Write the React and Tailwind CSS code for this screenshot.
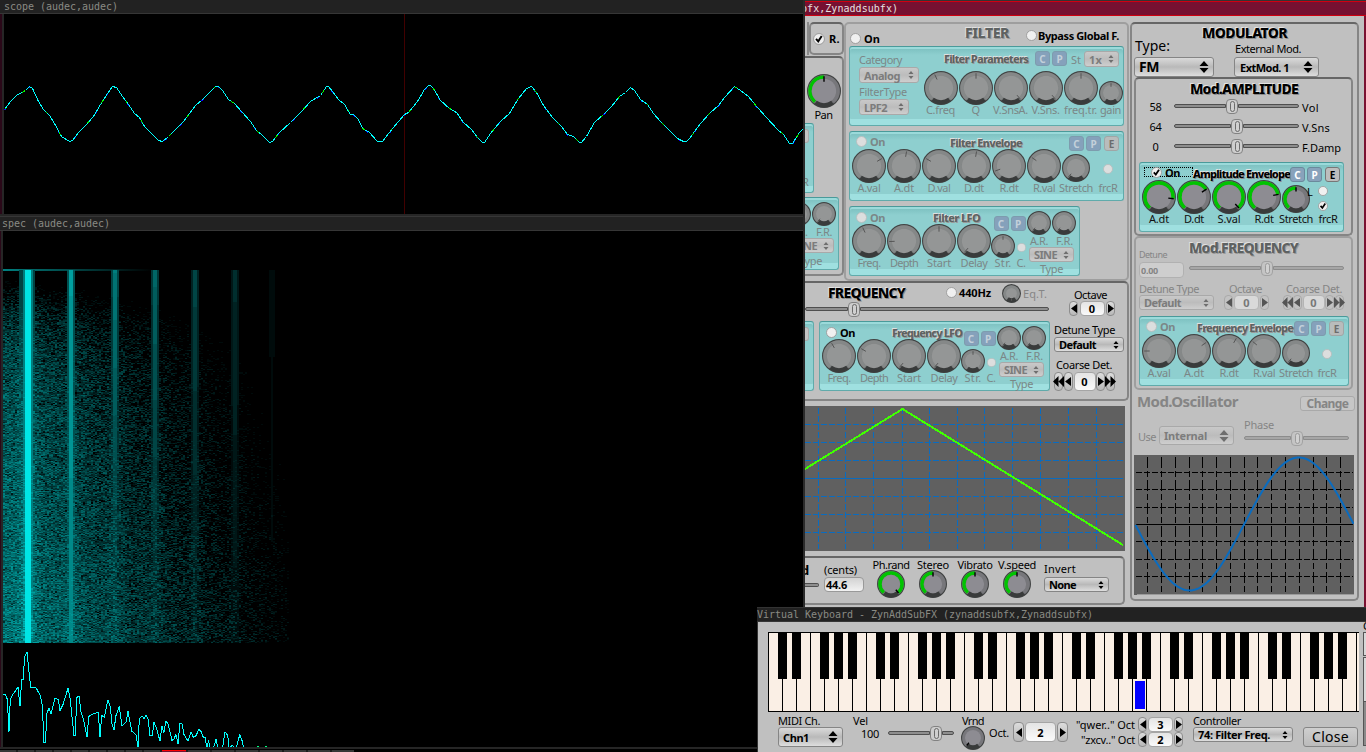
import React, { useLayoutEffect, useMemo, useRef, useState } from 'react';

/* ---------- text ---------- */

// Text set to a given advance width by adjusting its tracking.
function T({ w, className = '', children }) {
  const ref = useRef(null);
  const [ls, setLs] = useState(0);
  useLayoutEffect(() => {
    const natural = ref.current.getBoundingClientRect().width;
    setLs((w - natural) / String(children).length);
  }, []);
  return (
    <span className={`block shrink-0 whitespace-nowrap leading-none ${className}`} style={{ width: w }}>
      <span ref={ref} style={{ letterSpacing: ls }}>{children}</span>
    </span>
  );
}

const DIM = 'text-[#7b8787]';
const GREY = 'text-[#858585]';
const EMBOSS = 'font-extrabold text-black [text-shadow:-1px_-1px_0_#e4e4e4,1px_1px_0_#8a8a8a]';
const EMBOSS_DIM = 'font-extrabold text-[#5e6262] [text-shadow:-1px_-1px_0_#e0e0e0,1px_1px_0_#999]';

/* ---------- widgets ---------- */

function polar(c, r, deg) {
  const a = ((deg - 90) * Math.PI) / 180;
  return [c + r * Math.cos(a), c + r * Math.sin(a)];
}

function arcPath(c, r, from, to) {
  const [x1, y1] = polar(c, r, from);
  const [x2, y2] = polar(c, r, to);
  return `M${x1} ${y1}A${r} ${r} 0 ${to - from > 180 ? 1 : 0} 1 ${x2} ${y2}`;
}

function Knob({ s = 34, a = 0, on = false, className = '' }) {
  const c = s / 2;
  const R = c - 1.2;
  const ring = s > 25 ? 3.6 : 2.8;
  const [px, py] = polar(c, R - 1, a);
  const [qx, qy] = polar(c, R - s * 0.19, a);
  return (
    <svg width={s} height={s} className={`block shrink-0 ${className}`}>
      <circle cx={c} cy={c} r={R + 0.5} fill={on ? '#6f6f73' : '#7c7f7f'} stroke="#424444" strokeWidth="1.4" />
      <path d={arcPath(c, R - ring / 2, -140, 140)} stroke={on ? '#77777b' : '#858888'} strokeWidth={ring} fill="none" />
      {on && a > -139 && <path d={arcPath(c, R - ring / 2, -140, a)} stroke="#00c400" strokeWidth={ring} fill="none" />}
      <circle cx={c} cy={c} r={R - ring} fill={on ? '#8d8c92' : '#949696'} />
      <path d={arcPath(c, R - 1.5, 144, 216)} stroke="#393b3b" strokeWidth="4.2" fill="none" />
      <path d={`M${px} ${py}L${qx} ${qy}`} stroke={on ? '#000' : '#555'} strokeWidth={on ? 1.4 : 1} />
    </svg>
  );
}

function Dot({ checked, dim, s = 11, className = '' }) {
  return (
    <svg width={s} height={s} viewBox="0 0 11 11" className={`block shrink-0 ${className}`}>
      <circle cx="5.5" cy="5.5" r="5" fill={dim ? '#dcdede' : '#f0f0f0'} stroke={dim ? '#b5bdbd' : '#9a9a9a'} strokeWidth="0.9" />
      {checked && <path d="M2.8 5.4L4.8 7.6L8 2.8" stroke="#000" strokeWidth="1.8" fill="none" />}
    </svg>
  );
}

function UpDown({ big, dim }) {
  return big ? (
    <svg width="10" height="12" className="block shrink-0">
      <path d="M5 0L9.5 5H.5ZM5 12L9.5 7H.5Z" fill={dim ? '#6e6e6e' : '#000'} />
    </svg>
  ) : (
    <svg width="6" height="8" className="block shrink-0">
      <path d="M3 0L5.5 3H.5ZM3 8L5.5 5H.5Z" fill={dim ? '#6e6e6e' : '#000'} />
    </svg>
  );
}

function Select({ text, tw, dim, big, arrowBig, className = '' }) {
  return (
    <div
      className={`flex shrink-0 items-center justify-between rounded-[3px] border font-bold ${className} ${
        dim
          ? 'border-[#a9a9a9] bg-linear-to-b from-[#c9c9c9] via-[#bcbcbc] to-[#cecece] text-[#7c7c7c]'
          : 'border-[#858585] bg-linear-to-b from-[#dadada] via-[#b9b9b9] to-[#dedede] text-black'
      }`}
    >
      <T w={tw} className={big ? 'text-[14px]' : 'text-[11px]'}>{text}</T>
      <UpDown big={arrowBig} dim={dim} />
    </div>
  );
}

function Slider({ at, dim, className = '' }) {
  return (
    <div className={`flex h-[16px] shrink-0 items-center ${className}`}>
      <div className={`h-[4px] rounded-l-sm border ${at} ${dim ? 'border-[#8c8c8c] bg-[#a6a6a6]' : 'border-[#4f4f4f] bg-[#8e8e8e]'}`} />
      <div
        className={`flex h-[15px] w-[12px] shrink-0 items-center justify-center rounded-[4px] border ${
          dim ? 'border-[#a2a2a2] bg-[#c4c4c4]' : 'border-[#828282] bg-[#cdcdcd]'
        }`}
      >
        <div className={`h-[11px] w-[5px] rounded-full border bg-[#d0d0d0] ${dim ? 'border-[#9b9b9b]' : 'border-[#6b6b6b]'}`} />
      </div>
      <div className={`h-[4px] flex-1 rounded-r-sm border ${dim ? 'border-[#8c8c8c] bg-[#a6a6a6]' : 'border-[#4f4f4f] bg-[#8e8e8e]'}`} />
    </div>
  );
}

function Step({ dir, twice, dim, className }) {
  return (
    <div className={`flex h-full shrink-0 items-center justify-center rounded-[4px] border ${dim ? 'border-[#aaa] bg-[#c2c2c2]' : 'border-[#8d8d8d] bg-linear-to-b from-[#dcdcdc] to-[#b8b8b8]'} ${className}`}>
      <svg width={twice ? 11 : 6} height={twice ? 11 : 9} viewBox={twice ? '0 0 10 9' : '0 0 5 9'} preserveAspectRatio="none" className={`block shrink-0 ${dir === 'r' ? 'rotate-180' : ''}`}>
        <path d={twice ? 'M5 0V9L0 4.5ZM10 0V9L5 4.5Z' : 'M5 0V9L0 4.5Z'} fill={dim ? '#555' : '#000'} />
      </svg>
    </div>
  );
}

function Spin({ v, dim, coarse, btn = 'w-[9px]', box = 'w-[25px]', className = '' }) {
  return (
    <div className={`flex shrink-0 items-center justify-between ${className}`}>
      {coarse && <Step dir="l" twice dim={dim} className={btn} />}
      <Step dir="l" dim={dim} className={btn} />
      <div className={`flex h-full items-center justify-center rounded-[4px] border text-[11px] leading-none font-bold ${box} ${dim ? 'border-[#b4b4b4] bg-[#d9d9d9] text-[#777]' : 'border-[#a5a5a5] bg-linear-to-b from-[#e4e4e4] to-[#fafafa] text-black'}`}>
        {v}
      </div>
      <Step dir="r" dim={dim} className={btn} />
      {coarse && <Step dir="r" twice dim={dim} className={btn} />}
    </div>
  );
}

function Cap({ k, live }) {
  const tone =
    k === 'E'
      ? live
        ? 'bg-[#bdbdbd] border-[#777] text-black'
        : 'bg-[#b9bcbc] border-[#a0a6a6] text-[#6c6c6c]'
      : live
        ? 'bg-[#88a2bb] border-[#6b8a9c] text-white'
        : 'bg-[#85a1bb] border-[#7d9cae] text-[#c3d0da]';
  return <div className={`flex h-[15px] w-[15px] shrink-0 items-center justify-center rounded-[3px] border text-[10px] leading-none font-bold ${tone}`}>{k}</div>;
}

function Teal({ className = '', children }) {
  return (
    <div className={`shrink-0 rounded-[3px] border border-[#60abab] border-t-[#4a9a9a] bg-linear-to-b from-[#7fc2c2] from-[2px] via-[#8ecfcf] via-[8px] to-[#8ecfcf] shadow-[inset_0_-7px_0_-1px_#9fe0e0,inset_0_2px_0_#9bdada] ${className}`}>
      {children}
    </div>
  );
}

function Unit({ label, lw, live, slot = 'w-[35px]', pad = '', children }) {
  return (
    <div className={`flex shrink-0 flex-col items-center ${slot}`}>
      <div className={`flex h-[34px] items-center justify-center ${pad}`}>{children}</div>
      <T w={lw} className={`mt-[-1px] text-[11px] ${live ? 'text-[#111]' : DIM}`}>{label}</T>
    </div>
  );
}

function Frame({ dim, className = '', children }) {
  return (
    <div className={`shrink-0 rounded-[5px] border-2 ${dim ? 'border-[#9e9e9e]' : 'border-[#858585] border-t-[#666]'} ${className}`}>
      {children}
    </div>
  );
}

/* ---------- synth sections ---------- */

function Envelope({ title, tw, titleAt, knobs, live, wide, className }) {
  return (
    <Teal className={`h-[70px] ${className}`}>
      <div className="flex h-[17px] items-start">
        <div className={`flex h-[10px] w-[48px] shrink-0 items-center pl-[6px] ${live ? 'mt-[4px] ml-[4px] w-[49px] border border-dotted border-black pl-[1px]' : 'mt-[4px]'}`}>
          <Dot checked={live} dim={!live} />
          <T w={15} className={`ml-[3px] text-[11px] font-bold ${live ? 'text-black' : DIM}`}>On</T>
        </div>
        <T w={tw} className={`mt-[5px] text-[11px] ${live ? EMBOSS : EMBOSS_DIM} ${titleAt}`}>{title}</T>
        <div className="mt-[4px] mr-[4px] ml-auto flex">
          <Cap k="C" live={live} />
          <div className="w-[2px]" />
          <Cap k="P" live={live} />
          <div className="w-[3px]" />
          <Cap k="E" live={live} />
        </div>
      </div>
      <div className="flex pl-[1.5px]">
        {knobs.map(([l, w, a], i) => (
          <Unit key={i} label={l} lw={w} live={live}><Knob a={a} on={live} /></Unit>
        ))}
        <Unit label="Stretch" lw={34} live={live} slot="w-[29px]" pad="pt-[4px]"><Knob s={28} a={live ? 0 : -140} on={live} /></Unit>
        <Unit label="frcR" lw={19} live={live} slot={wide ? 'w-[33px]' : 'w-[35px]'} pad="pt-[5px]">
          {live ? (
            <div className="flex h-[34px] items-center gap-[5px] pb-[3px] pl-[20px]">
              <div className="-ml-[20px] flex flex-col gap-[4px]">
                <div className="-ml-[11px] flex items-center gap-[6px]">
                  <span className="w-[5px] text-[11px] leading-none text-black">L</span>
                  <Dot s={10} />
                </div>
                <Dot checked s={10} />
              </div>
            </div>
          ) : <Dot dim s={10} />}
        </Unit>
      </div>
    </Teal>
  );
}

function Lfo({ title, tw, titleAt, on, angles, className = '' }) {
  const names = [['Freq.', 23], ['Depth', 28], ['Start', 24], ['Delay', 27]];
  return (
    <Teal className={`flex h-[70px] w-[231px] ${className}`}>
      <div className="w-[141.5px] shrink-0">
        <div className="flex h-[17px] items-start">
          <div className="mt-[5px] ml-[6px] flex w-[42px] shrink-0 items-center">
            <Dot dim={!on} />
            <T w={15} className={`ml-[3px] text-[11px] font-bold ${on ? 'text-black' : DIM}`}>On</T>
          </div>
          <T w={tw} className={`mt-[5px] text-[11px] ${EMBOSS_DIM} ${titleAt}`}>{title}</T>
        </div>
        <div className="flex pl-[1.5px]">
          {names.map(([l, w], i) => <Unit key={l} label={l} lw={w}><Knob a={angles[i]} /></Unit>)}
        </div>
      </div>
      <div className="flex w-[34px] shrink-0 flex-col">
        <div className="mt-[9px] ml-[2px] flex gap-[2px]"><Cap k="C" /><Cap k="P" /></div>
        <div className="mt-[3px] flex h-[24px] items-center">
          <Knob s={24} className="-ml-[1px]" />
          <Dot dim s={9} className="mt-[3px] ml-[2px]" />
        </div>
        <div className={`-mt-[1px] flex ${DIM}`}>
          <T w={17} className="ml-[3px] text-[11px]">Str.</T>
          <T w={9} className="ml-[5px] text-[11px]">C.</T>
        </div>
      </div>
      <div className={`flex w-[52px] shrink-0 flex-col items-center ${DIM}`}>
        <div className="mt-[4px] flex gap-[1px]"><Knob s={24} a={-140} /><Knob s={24} a={-140} /></div>
        <div className="flex gap-[8px]"><T w={18} className="text-[11px]">A.R.</T><T w={17} className="text-[11px]">F.R.</T></div>
        <Select dim text="SINE" tw={23} className="mt-[1px] h-[15px] w-[45px] px-[4px]" />
        <T w={23} className="mt-[1px] text-[11px]">Type</T>
      </div>
    </Teal>
  );
}

function LeftStrip() {
  return (
    <div className="flex w-[39px] shrink-0 flex-col">
      <div className="mt-[6px] flex">
        <div className="h-[33px] w-[4px] shrink-0 border-r-2 border-[#8a8a8a]" />
        <Frame className="flex h-[33px] w-[35px] items-center pl-[2px]">
          <Dot checked s={12} />
          <T w={11} className="ml-[4px] text-[11px] font-bold">R.</T>
        </Frame>
      </div>
      <div className="mt-[1px] h-[220px] rounded-r-[5px] border-2 border-l-0 border-[#858585] border-t-[#666]">
        <div className="flex flex-col items-center pt-[16px]">
          <Knob s={34} on className="ml-[1px]" />
          <T w={18} className="mt-[1px] text-[11px]">Pan</T>
        </div>
        <Teal className="mt-[3px] flex h-[70px] w-[9px] flex-col justify-between overflow-hidden rounded-l-none border-l-0 py-[5px]">
          <div className="h-[14px] w-[4px] rounded-r-[3px] border border-l-0 border-[#a9a9a9] bg-[#c4c4c4]" />
          <T w={7} className={`-ml-[3px] text-[11px] ${DIM}`}>R</T>
        </Teal>
        <Teal className="mt-[4px] flex h-[73px] w-[34px] flex-col overflow-hidden rounded-l-none border-l-0">
          <div className="mt-[4px] -ml-[18px] flex gap-[1px]"><Knob s={24} a={-140} /><Knob s={24} a={-140} /></div>
          <div className={`flex ${DIM}`}><T w={3} className="text-[11px]">.</T><T w={16} className="ml-[8px] text-[11px]">F.R.</T></div>
          <Select dim text="SINE" tw={23} className="mt-[1px] -ml-[16px] h-[15px] w-[45px] px-[4px]" />
          <T w={23} className={`mt-[2px] -ml-[6px] text-[11px] ${DIM}`}>Type</T>
        </Teal>
      </div>
    </div>
  );
}

function FilterPanel() {
  const knobs = [['C.freq', 29, -25], ['Q', 8, 0], ['V.SnsA.', 35, 140], ['V.Sns.', 28, 140], ['freq.tr.', 33, 0]];
  return (
    <Frame dim className="mt-[6px] h-[259px] w-[285px] px-[3px]">
      <div className="flex h-[22px] items-start">
        <Dot className="mt-[9px] ml-[1px]" />
        <T w={16} className="mt-[9px] ml-[3px] text-[11px] font-bold">On</T>
        <T w={44} className={`mt-[2px] ml-[85px] text-[14px] ${EMBOSS_DIM}`}>FILTER</T>
        <Dot className="mt-[6px] ml-[17px]" />
        <T w={81} className="mt-[6px] ml-[1px] text-[11px] font-bold">Bypass Global F.</T>
      </div>
      <Teal className={`flex h-[80px] w-[275px] ${DIM}`}>
        <div className="ml-[9px] w-[64px] shrink-0">
          <T w={43} className="mt-[7px] text-[11px]">Category</T>
          <Select dim text="Analog" tw={36} className="mt-[2px] h-[16px] w-[60px] px-[4px]" />
          <T w={48} className="mt-[3px] text-[11px]">FilterType</T>
          <Select dim text="LPF2" tw={23} className="mt-[2px] h-[16px] w-[50px] px-[4px]" />
        </div>
        <div className="w-[200px] shrink-0">
          <div className="flex h-[23px] items-start">
            <T w={84} className={`mt-[6px] ml-[21px] text-[11px] ${EMBOSS_DIM}`}>Filter Parameters</T>
            <div className="mt-[4px] ml-[7px] flex gap-[2px]"><Cap k="C" /><Cap k="P" /></div>
            <T w={10} className="mt-[7px] ml-[4px] text-[11px]">St</T>
            <Select dim text="1x" tw={13} className="mt-[4px] ml-[3px] h-[16px] w-[35px] px-[4px]" />
          </div>
          <div className="flex pt-[1px]">
            {knobs.map(([l, w, a]) => <Unit key={l} label={l} lw={w}><Knob a={a} /></Unit>)}
            <Unit label="gain" lw={21} slot="w-[25px]" pad="pt-[9px]"><Knob s={24} /></Unit>
          </div>
        </div>
      </Teal>
      <Envelope
        className="mt-[5px] w-[275px]"
        title="Filter Envelope" tw={72} titleAt="ml-[52px]"
        knobs={[['A.val', 23, 60], ['A.dt', 20, 10], ['D.val', 23, -60], ['D.dt', 20, 10], ['R.dt', 19, -110], ['R.val', 22, -55]]}
      />
      <Lfo className="mt-[5px]" title="Filter LFO" tw={47} titleAt="ml-[35px]" angles={[-25, -92, 0, -140]} />
    </Frame>
  );
}

function FrequencyPanel() {
  return (
    <Frame className="h-[120px] rounded-l-none border-l-0">
      <div className="flex">
        <div className="w-[246px] shrink-0">
          <div className="flex h-[19px] items-start">
            <T w={77} className={`mt-[3px] ml-[23px] text-[14px] ${EMBOSS}`}>FREQUENCY</T>
            <Dot className="mt-[4px] ml-[41px]" />
            <T w={32} className="mt-[4px] ml-[2px] text-[11px] font-bold">440Hz</T>
            <Knob s={19} a={180} className="mt-[1px] ml-[11px]" />
            <T w={24} className={`mt-[5px] ml-[2px] text-[11px] ${GREY}`}>Eq.T.</T>
          </div>
          <Slider at="w-[43px]" className="-mt-[1px] w-[244px]" />
          <div className="mt-[4px] flex">
            <Teal className="h-[70px] w-[9px] rounded-l-none border-l-0 pt-[5px]">
              <div className="h-[14px] w-[4px] rounded-r-[3px] border border-l-0 border-[#a9a9a9] bg-[#c4c4c4]" />
            </Teal>
            <Lfo on className="ml-[5px]" title="Frequency LFO" tw={70} titleAt="ml-[24px]" angles={[-30, -60, -140, -140]} />
          </div>
        </div>
        <div className="flex w-[74px] shrink-0 flex-col pl-[3px]">
          <T w={33} className="mt-[6px] ml-[20px] text-[11px]">Octave</T>
          <Spin v="0" className="mt-[1px] ml-[15px] h-[15px] w-[46px]" />
          <T w={61} className="mt-[8px] text-[11px]">Detune Type</T>
          <Select text="Default" tw={37} className="mt-[2px] h-[15px] w-[70px] px-[4px]" />
          <T w={56} className="mt-[7px] ml-[2px] text-[11px]">Coarse Det.</T>
          <Spin v="0" coarse box="w-[22px]" className="mt-[2px] h-[19px] w-[61px]" />
        </div>
      </div>
    </Frame>
  );
}

function OscGraph() {
  const vs = [13.5, 40.5, 68.5, 97.5, 124.5, 152.5, 179.5, 207.5, 235.5, 263.5, 291.5];
  const hs = [18.5, 36.5, 54.5, 90.5, 108.5, 126.5];
  return (
    <svg width="320" height="145" className="mt-[5px] block shrink-0 bg-[#606060]" shapeRendering="crispEdges">
      <g stroke="#0a6cc0" strokeDasharray="6 2">
        {vs.map((x) => <path key={x} d={`M${x} 2V143`} />)}
        {hs.map((y) => <path key={y} d={`M0 ${y}H318`} />)}
      </g>
      <path d="M0 72.5H318" stroke="#0a6cc0" />
      <path d="M0 63L97.5 3L318 139" stroke="#40ff00" strokeWidth="2" fill="none" />
    </svg>
  );
}

function VoiceBar() {
  const ks = [['Ph.rand', 37, 140], ['Stereo', 32, 0], ['Vibrato', 35, 0], ['V.speed', 38, 0]];
  return (
    <Frame className="mt-[5px] flex h-[49px] w-[320px] rounded-l-none border-l-0">
      <div className="w-[15px] shrink-0">
        <div className="mt-[6px] w-[4px] overflow-hidden"><T w={8} className="-ml-[4px] text-[13px] font-bold">d</T></div>
        <div className="mt-[6px] h-[4px] w-[14px] rounded-r-sm border border-l-0 border-[#4f4f4f] bg-[#8e8e8e]" />
      </div>
      <div className="ml-[4px] w-[45px] shrink-0">
        <T w={33} className="mt-[6px] text-[11px]">(cents)</T>
        <div className="mt-[2px] flex h-[15px] w-[40px] items-center rounded-[4px] border border-[#999] bg-linear-to-b from-[#d2d2d2] to-[#f2f2f2] pl-[1px]">
          <T w={21} className="text-[11px] font-bold">44.6</T>
        </div>
      </div>
      <div className="ml-[1px] flex shrink-0">
        {ks.map(([l, w, a]) => (
          <div key={l} className="flex w-[42px] flex-col items-center">
            <T w={w} className="mt-[1px] text-[11px]">{l}</T>
            <Knob s={28} on a={a} />
          </div>
        ))}
      </div>
      <div className="ml-[6px]">
        <T w={32} className="mt-[5px] text-[11px]">Invert</T>
        <Select text="None" tw={27} className="mt-[3px] h-[15px] w-[65px] px-[4px]" />
      </div>
    </Frame>
  );
}

function SineGraph() {
  const vs = [13.5, 27.5, 41.5, 55.5, 68.5, 82.5, 96.5, 110.5, 123.5, 137.5, 151.5, 165.5, 179.5, 192.5, 206.5];
  const hs = [17.5, 34.5, 52.5, 86.5, 104.5, 121.5];
  let d = '';
  for (let i = 0; i <= 109; i++) {
    const x = 1.5 + i * 2;
    d += `${i ? 'L' : 'M'}${x} ${(69 + 66.5 * Math.sin(((x - 1) / 218.6) * 2 * Math.PI)).toFixed(2)}`;
  }
  return (
    <svg width="220" height="140" className="mt-[11px] -ml-[1px] block shrink-0 bg-[#606060]">
      <g stroke="#000" shapeRendering="crispEdges">
        {vs.map((x) => <path key={x} d={`M${x} 2V138`} strokeDasharray="11 3 6 3" />)}
        {hs.map((y) => <path key={y} d={`M2 ${y}H219`} strokeDasharray="6 2" />)}
        <path d="M2 69.5H219" />
      </g>
      <path d={d} stroke="#0a6cc0" strokeWidth="2" fill="none" />
      <path d="M3 139.5H220" stroke="#9a9a9a" />
    </svg>
  );
}

function Modulator() {
  const rows = [['58', 'Vol', 17, 'w-[52px]', 12], ['64', 'V.Sns', 28, 'w-[57px]', 12], ['0', 'F.Damp', 39, 'w-[57px]', 6]];
  return (
    <Frame className="mt-[6px] ml-[1px] h-[579px] w-[229px] pl-[3px]">
      <T w={85} className={`mt-[2px] ml-[67px] text-[14px] ${EMBOSS}`}>MODULATOR</T>
      <div className="flex">
        <div className="w-[100px] shrink-0">
          <T w={35} className="-mt-[1px] text-[14px]">Type:</T>
          <Select text="FM" tw={20} big arrowBig className="mt-[4px] -ml-[1px] h-[20px] w-[80px] px-[4px]" />
        </div>
        <div>
          <T w={66} className="mt-[3px] text-[11px]">External Mod.</T>
          <Select text="ExtMod. 1" tw={49} arrowBig className="mt-[3px] -ml-[1px] h-[20px] w-[85px] px-[5px]" />
        </div>
      </div>
      <Frame className="-ml-[1px] h-[159px] w-[219px] pl-[3px]">
        <T w={108} className={`mt-[3px] ml-[51px] text-[14px] ${EMBOSS}`}>Mod.AMPLITUDE</T>
        {rows.map(([n, l, w, at, nw]) => (
          <div key={l} className="flex h-[20px] items-center">
            <div className="flex w-[33px] justify-center"><T w={nw} className="text-[11px]">{n}</T></div>
            <Slider at={at} className="ml-[2px] w-[125px]" />
            <T w={w} className="mt-[2px] ml-[3px] text-[11px]">{l}</T>
          </div>
        ))}
        <Envelope
          live className="mt-[6px] w-[205px]" title="Amplitude Envelope" tw={97} titleAt="ml-[0px]"
          knobs={[['A.dt', 20, 97], ['D.dt', 20, 58], ['S.val', 23, 138], ['R.dt', 19, 80]]}
        />
      </Frame>
      <Frame dim className="-ml-[1px] h-[154px] w-[219px] pl-[3px]">
        <div className="flex h-[22px]">
          <T w={28} className={`mt-[12px] text-[9px] ${GREY}`}>Detune</T>
          <T w={109} className={`mt-[3px] ml-[22px] text-[14px] ${EMBOSS_DIM}`}>Mod.FREQUENCY</T>
        </div>
        <div className="flex h-[19px] items-start">
          <div className={`mt-[2px] flex h-[16px] w-[45px] shrink-0 items-center rounded-[4px] border border-[#b1b1b1] bg-[#cecece] pl-[1px] ${GREY}`}>
            <T w={17} className="text-[9px] font-bold">0.00</T>
          </div>
          <Slider dim at="w-[72px]" className="ml-[5px] w-[155px]" />
        </div>
        <div className={`mt-[4px] flex ${GREY}`}>
          <T w={60} className="text-[11px]">Detune Type</T>
          <T w={33} className="ml-[30px] text-[11px]">Octave</T>
          <T w={56} className="ml-[24px] text-[11px]">Coarse Det.</T>
        </div>
        <div className="mt-[1px] flex">
          <Select dim text="Default" tw={37} className="h-[15px] w-[75px] px-[4px]" />
          <Spin dim v="0" className="ml-[10px] h-[15px] w-[45px]" />
          <Spin dim v="0" coarse box="w-[22px]" className="ml-[14px] h-[15px] w-[61px]" />
        </div>
        <Envelope
          wide className="mt-[6px] w-[210px]" title="Frequency Envelope" tw={96} titleAt="ml-[9px]"
          knobs={[['A.val', 23, -90], ['A.dt', 20, 55], ['R.dt', 19, 30], ['R.val', 22, -50]]}
        />
      </Frame>
      <div className="flex h-[22px] justify-between pr-[2px]">
        <T w={101} className={`mt-[4px] ml-[2px] text-[15px] font-bold ${GREY}`}>Mod.Oscillator</T>
        <div className={`mt-[6px] flex h-[15px] w-[55px] items-center justify-center rounded-[3px] border border-[#a9a9a9] bg-[#c6c6c6] ${GREY}`}>
          <T w={42} className="text-[12px] font-bold">Change</T>
        </div>
      </div>
      <div className={`flex h-[32px] ${GREY}`}>
        <T w={18} className="mt-[19px] ml-[3px] text-[11px]">Use</T>
        <Select dim arrowBig text="Internal" tw={43} className="mt-[14px] ml-[3px] h-[19px] w-[75px] px-[4px]" />
        <div className="ml-[10px]">
          <T w={30} className="mt-[7px] text-[11px]">Phase</T>
          <Slider dim at="w-[47px]" className="w-[105px]" />
        </div>
      </div>
      <SineGraph />
    </Frame>
  );
}

/* ---------- windows ---------- */

const WAVE = '4,109 10,101 16,95 25,90 29,86 32,88 38,101 43,109 49,115 54,123 61,136 69,141 72,140 78,132 84,126 93,116 100,104 107,93 112,86 116,87 122,96 128,104 134,113 139,117 144,126 151,133 158,140 162,141 168,136 174,130 183,121 195,105 201,100 210,91 215,86 218,86 222,90 228,99 234,103 242,112 250,121 256,130 262,135 269,142 272,141 278,133 290,122 300,112 310,101 320,95 326,86 328,86 332,91 338,99 344,104 350,114 353,114 358,119 362,128 369,132 377,141 382,141 392,128 404,114 408,112 417,101 424,89 428,85 430,85 433,88 440,100 449,108 456,112 463,122 471,129 477,137 482,142 484,142 490,133 500,121 509,113 518,98 526,88 531,86 536,92 543,105 552,117 561,126 567,134 573,136 579,142 581,142 586,136 594,122 603,114 611,106 619,96 625,92 630,87 634,90 640,99 647,104 653,113 660,121 668,129 677,138 683,141 686,141 689,138 700,123 709,113 718,105 724,97 734,86 740,90 748,96 757,107 766,117 777,129 783,134 789,143 792,143 799,132 804,127';

const SPECTRUM = '9,403 16,403 22,416 27,513 31,416 40,400 54,380 60,436 65,358 69,358 74,288 81,275 92,382 108,382 121,405 127,435 132,547 135,547 139,500 141,458 147,442 153,460 165,412 175,418 180,450 190,430 204,383 210,412 222,525 226,525 230,412 237,406 243,455 250,475 261,530 266,468 276,462 282,460 295,455 300,530 305,465 313,470 324,418 331,440 336,490 342,508 348,465 358,438 366,496 378,485 384,452 390,485 396,513 408,522 414,560 418,475 426,466 432,475 438,464 444,475 450,525 457,525 462,485 470,505 480,542 486,496 491,518 498,482 504,490 516,540 522,535 528,522 534,550 540,488 546,490 552,522 564,542 573,514 580,530 588,526 597,506 604,514 610,530 615,530 621,562 626,540 630,566 640,566 648,535 654,566 668,560 675,514 683,524 687,562 698,554 703,566 710,558 719,523 726,540 731,562'
  .split(' ')
  .map((p) => p.split(',').map(Number))
  .map(([x, y]) => `${(x / 3).toFixed(1)},${(y / 3 + 329).toFixed(1)}`)
  .join(' ');

// [centre, half width of core, brightness of core, halo brightness]
const PARTIALS = [
  [27, 3, 0.93, 0.34],
  [71, 2, 0.62, 0.16],
  [114, 2, 0.48, 0.1],
  [155, 2, 0.4, 0.09],
  [195, 2, 0.27, 0.08],
  [234, 1.5, 0.17, 0.05],
  [271, 1, 0.05, 0.0],
];

const LEVELS = 22;

function buildSpectrogram() {
  let seed = 1234567;
  const rnd = () => {
    seed = (seed * 1664525 + 1013904223) >>> 0;
    return seed / 4294967296;
  };
  const paths = Array.from({ length: LEVELS + 1 }, () => []);
  for (let y = 0; y < 373; y++) {
    const t = y / 373;
    const fade = 0.48 - 0.2 * (1 - t) - 0.55 * Math.exp(-13 * t);
    let run = 3;
    let prev = -1;
    for (let x = 3; x <= 290; x += 2) {
      let base = fade - 0.0018 * x;
      let tone = 0;
      for (const [c, hw, b, halo] of PARTIALS) {
        const d = Math.abs(x + 0.5 - c);
        base += halo * Math.exp(-d / 5) * (0.6 + 0.4 * t);
        const keep = c === 27 ? 1 : c === 71 ? 1 - 0.15 * t : Math.max(0, 1 - 0.75 * t);
        if (d <= hw) tone = Math.max(tone, b * keep);
        else if (d <= hw + 2) tone = Math.max(tone, b * keep * 0.55);
        else if (c === 27 && d <= 8) tone = Math.max(tone, 0.26);
      }
      const r = rnd();
      let v = base + (r - 0.5) * 0.3 - (rnd() < 0.2 ? 0.14 : 0);
      v = Math.max(v, tone);
      const lvl = Math.max(0, Math.min(LEVELS, Math.round(v * LEVELS)));
      if (lvl !== prev) {
        if (prev > 0) paths[prev].push(`M${run} ${y}H${x}V${y + 1}H${run}Z`);
        run = x;
        prev = lvl;
      }
    }
  }
  return paths.map((p) => p.join(''));
}

function TitleBar({ className = '', w, children }) {
  return (
    <div className={`flex shrink-0 items-center border-b border-[#363636] bg-[#222] font-['DejaVu_Sans_Mono',monospace] text-[10px] text-[#8a8a84] ${className}`}>
      <T w={w}>{children}</T>
    </div>
  );
}

function ScopeWindow() {
  return (
    <div className="absolute top-0 left-0 flex h-[216px] w-[805px] flex-col border-r-2 border-b-2 border-r-[#2a2a2a] border-b-[#262626] bg-black">
      <TitleBar w={114} className="h-[14px] pl-[4px]">scope (audec,audec)</TitleBar>
      <svg width="803" height="200" viewBox="0 14 803 200" className="block" shapeRendering="crispEdges">
        <rect x="0" y="14" width="2" height="200" fill="#2a0818" />
        <rect x="2" y="14" width="2" height="200" fill="#262626" />
        <path d="M404.5 14V214" stroke="#420000" />
        <polyline points={WAVE} fill="none" stroke="#0000ff" strokeDasharray="2 31 3 19" transform="translate(0.5 1.2)" />
        <polyline points={WAVE} fill="none" stroke="#00ffff" transform="translate(0.5 0.5)" />
        <polyline points={WAVE} fill="none" stroke="#00ff00" strokeDasharray="2 23 3 37" transform="translate(0.5 0.5)" />
      </svg>
    </div>
  );
}

function SpecWindow() {
  const layers = useMemo(buildSpectrogram, []);
  return (
    <div className="absolute top-[216px] left-0 flex h-[536px] w-[805px] flex-col border-r-2 border-[#2a2a2a] bg-black">
      <TitleBar w={108} className="h-[15px] border-t border-t-[#363636] pl-[2px]">spec (audec,audec)</TitleBar>
      <svg width="803" height="516" className="block" shapeRendering="crispEdges">
        <defs>
          <linearGradient id="edge"><stop offset="0" stopColor="#008080" /><stop offset="1" stopColor="#000" /></linearGradient>
        </defs>
        <rect x="3" y="38" width="150" height="2" fill="url(#edge)" />
        <g transform="translate(0 39)">
          {layers.map((d, i) => i > 0 && <path key={i} d={d} fill={`rgb(0,${Math.round((i / LEVELS) * 252)},${Math.round((i / LEVELS) * 252)})`} />)}
        </g>
        <polyline points={SPECTRUM} fill="none" stroke="#00ffff" transform="translate(0 0.5)" />
        <path d="M257 515.5H259M265 515.5H267" stroke="#00ff80" />
        <rect x="0" y="0" width="1" height="516" fill="#2a0818" />
        <rect x="1" y="0" width="2" height="516" fill="#262626" />
      </svg>
      <div className="h-[2px] bg-[#262626]" />
      <div className="mt-[1px] flex h-[2px] w-[354px] gap-[2px] bg-[#1c1c1c]">
        {Array.from({ length: 9 }, (_, i) => <div key={i} className="w-[16px] bg-[#363636]" />)}
        <div className="w-[24px] border-t border-[#f00] bg-[#7a1030]" />
        {Array.from({ length: 7 }, (_, i) => <div key={i} className="flex-1 bg-[#363636]" />)}
      </div>
    </div>
  );
}

function SynthWindow() {
  return (
    <div className="absolute top-0 left-[805px] flex h-[608px] w-[561px] flex-col overflow-hidden border-t border-[#333] bg-[#7a1030]">
      <div className="flex h-[15px] shrink-0 items-center border-y border-[#d00010] bg-[#761031] font-['DejaVu_Sans_Mono',monospace] text-[10px] text-[#e8e0e0]">
        <T w={97} className="-ml-[4px]">bfx,Zynaddsubfx)</T>
      </div>
      <div className="flex h-[591px] w-[559px] shrink-0 overflow-hidden bg-[#c0c0c0]">
        <div className="flex w-[324px] shrink-0 flex-col">
          <div className="flex"><LeftStrip /><FilterPanel /></div>
          <FrequencyPanel />
          <OscGraph />
          <VoiceBar />
        </div>
        <Modulator />
      </div>
    </div>
  );
}

function Octave() {
  return (
    <div className="w-[98px] shrink-0">
      <div className="flex h-[46px]">
        {[[3, 10], [3, 10], [17, 10], [3, 10], [3, 10]].length && (
          <svg width="98" height="46" className="block" shapeRendering="crispEdges">
            <path d="M9 0h9v46h-9zM23 0h9v46h-9zM51 0h9v46h-9zM65 0h9v46h-9zM79 0h9v46h-9zM41 0h1v46h-1zM97 0h1v46h-1z" />
          </svg>
        )}
      </div>
      <div className="flex h-[32px]">
        {[0, 1, 2, 3, 4, 5, 6].map((k) => <div key={k} className="w-[14px] border-r border-black" />)}
      </div>
    </div>
  );
}

function KeyboardWindow() {
  return (
    <div className="absolute top-[607px] left-[757px] flex h-[145px] w-[609px] flex-col border-t border-[#333] bg-[#c0c0c0]">
      <TitleBar w={336} className="h-[14px]">Virtual Keyboard - ZynAddSubFX (zynaddsubfx,Zynaddsubfx)</TitleBar>
      <div className="flex flex-1 overflow-hidden border-l border-[#333]">
        <div className="w-[601px] shrink-0 pl-[10px]">
          <div className="relative mt-[10px] flex h-[80px] w-[591px] border-y border-l border-black bg-[#faefe5]">
            {[0, 1, 2, 3, 4, 5].map((o) => <Octave key={o} />)}
            <div className="absolute top-[48px] left-[366px] h-[28px] w-[10px] bg-[#0000ff]" />
          </div>
          <div className="flex pl-[10px]">
            <div className="w-[75px] shrink-0">
              <T w={42} className="mt-[3px] text-[11px]">MIDI Ch.</T>
              <Select text="Chn1" tw={26} arrowBig className="mt-[1px] h-[20px] w-[65px] px-[4px]" />
            </div>
            <div className="w-[109px] shrink-0">
              <T w={15} className="mt-[3px] text-[11px]">Vel</T>
              <div className="mt-[-1px] flex items-center">
                <T w={18} className="ml-[8px] text-[11px]">100</T>
                <Slider at="w-[42px]" className="ml-[9px] w-[66px]" />
              </div>
            </div>
            <div className="w-[27px] shrink-0">
              <T w={22} className="mt-[3px] text-[11px]">Vrnd</T>
              <Knob s={24} on a={-140} className="-ml-[1px]" />
            </div>
            <T w={20} className="mt-[15px] text-[11px]">Oct.</T>
            <Spin v="2" btn="w-[11px]" box="w-[31px]" className="mt-[10px] ml-[4px] h-[20px] w-[55px]" />
            <div className="ml-[8px] flex w-[60px] shrink-0 flex-col items-end pr-[1px]">
              <T w={59} className="mt-[7px] text-[11px]">"qwer.." Oct</T>
              <T w={54} className="mt-[4px] text-[11px]">"zxcv.." Oct</T>
            </div>
            <div className="ml-[2px] w-[56px] shrink-0">
              <Spin v="3" className="mt-[5px] h-[15px] w-[45px]" />
              <Spin v="2" className="h-[15px] w-[45px]" />
            </div>
            <div className="-ml-[1px] w-[110px] shrink-0">
              <T w={48} className="mt-[3px] text-[11px]">Controller</T>
              <Select text="74: Filter Freq." tw={72} className="mt-[1px] h-[15px] w-[100px] px-[4px]" />
            </div>
            <div className="mt-[15px] flex h-[20px] w-[55px] shrink-0 items-center justify-center rounded-[3px] border border-[#858585] bg-linear-to-b from-[#cfcfcf] to-[#bbb]">
              <T w={37} className="text-[14px]">Close</T>
            </div>
          </div>
        </div>
        <div className="ml-[4px] w-[4px] shrink-0 overflow-hidden">
          <T w={7} className="-mt-[2px] text-[11px]">C</T>
          <div className="mt-[1px] h-[24px] border border-r-0 border-[#555] bg-[#d8d8d8]" />
          <div className="mt-[1px] h-[45px] border border-r-0 border-[#555] bg-[#d8d8d8]" />
          <div className="h-[44px] border border-t-0 border-r-0 border-[#555] bg-[#8a8a8a]" />
        </div>
      </div>
    </div>
  );
}

export default function App() {
  return (
    <div className="relative h-[752px] w-[1366px] overflow-hidden bg-black font-['Noto_Sans',sans-serif] text-black">
      <ScopeWindow />
      <SpecWindow />
      <SynthWindow />
      <KeyboardWindow />
    </div>
  );
}
